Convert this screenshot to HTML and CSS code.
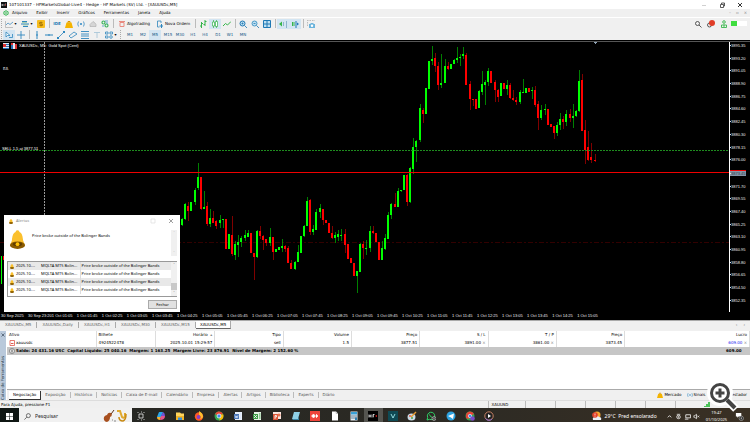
FILE: index.html
```html
<!DOCTYPE html>
<html lang="pt-BR">
<head>
    <meta charset="UTF-8">
    <meta name="viewport" content="width=device-width, initial-scale=1.0">
    <title>HFMarketsGlobal-Live4 - XAUUSDc,M5</title>
    <link rel="stylesheet" href="styles.css">
</head>
<body>
    <svg class="sprite" aria-hidden="true">
        <symbol id="bell" viewBox="0 0 16 20">
            <path d="M8 0C6.600 0 6 1 6 2 3 3 2.500 7 2 11L0 16h16l-2-5C13.500 7 13 3 10 2 10 1 9.400 0 8 0Z" fill="#fbc02d"/>
            <ellipse cx="8" cy="16" rx="8" ry="4" fill="#8a5a00"/>
            <ellipse cx="8" cy="15" rx="5" ry="2" fill="#5f3d00"/>
            <circle cx="8" cy="15" r="2" fill="#ffc107"/>
        </symbol>
        <symbol id="bag" viewBox="0 0 8 8">
            <path d="M3 3V1.500h2V3" fill="none" stroke="#d89000"/>
            <path d="M1.500 2.500h5L8 8H0Z" fill="#f5b400"/>
        </symbol>
        <symbol id="signal" viewBox="0 0 8 8">
            <path d="M1.500 1.500Q0 4 1.500 6.500M6.500 1.500Q8 4 6.500 6.500M3 3 5 5M5 3 3 5" fill="none" stroke="#3a8dc4" stroke-width=".8"/>
        </symbol>
        <symbol id="cloud" viewBox="0 0 8 8">
            <path d="M1 6.500V4.500L2.500 3 4 1.500 6 3l1 1.500v2Z" fill="#d6d6d6" stroke="#aaa" stroke-width=".6"/>
        </symbol>
        <symbol id="cross" viewBox="0 0 8 8">
            <path d="M2 2 6 6M6 2 2 6" fill="none" stroke="currentColor" stroke-width=".8"/>
        </symbol>
    </svg>

    <div class="app">
        <header class="titlebar">
            <svg class="logo" viewBox="0 0 6 6"><path fill="#111" d="M0 0h6v6H0z"/><path d="M1 2v2M2 2v2M1 3h1M4 4V2h1" stroke="#fff" stroke-width=".5"/><path d="M4 3h1" stroke="#e00" stroke-width=".7"/></svg>
            <h1 class="title">107101337 - HFMarketsGlobal-Live4 - Hedge - HF Markets (SV) Ltd. - [XAUUSDc,M5]</h1>
            <div class="window-buttons">
                <button class="win" aria-label="Minimizar"><svg viewBox="0 0 8 8"><path d="M2 4.500h4" stroke="#bbb" stroke-width=".7"/></svg></button>
                <button class="win" aria-label="Restaurar"><svg viewBox="0 0 8 8"><path d="M2.500 3.500h3v3h-3zM3.500 3V2h3v3H6" fill="none" stroke="#333" stroke-width=".8"/></svg></button>
                <button class="win" aria-label="Fechar"><svg viewBox="0 0 8 8"><use href="#cross"/></svg></button>
            </div>
        </header>

        <nav class="menubar">
            <svg class="menu-logo" viewBox="0 0 6 6"><path d="M1.500 1Q0 3 1.500 5M4.500 1Q6 3 4.500 5M3 0v6" fill="none" stroke="#2bb34a"/></svg>
            <button class="menu">Arquivo</button>
            <button class="menu">Exibir</button>
            <button class="menu">Inserir</button>
            <button class="menu">Gráficos</button>
            <button class="menu">Ferramentas</button>
            <button class="menu">Janela</button>
            <button class="menu">Ajuda</button>
            <div class="child-buttons"><span>–</span><span>▫</span><span>×</span></div>
        </nav>

        <div class="toolbar">
            <div class="grip"></div>
            <button class="tool drop" aria-label="Novo gráfico"><svg viewBox="0 0 8 8"><path d="M.5 1v6.500H8" fill="none" stroke="#aaa" stroke-width=".7"/><path d="M1 5 3 3l2 1.500L8 2" fill="none" stroke="#4a90c0" stroke-width=".8"/></svg><i>▾</i></button>
            <button class="tool drop" aria-label="Perfis"><svg viewBox="0 0 8 8"><path d="M1 1.500h5M0 4h8M2 6.500h5" stroke="#2f86bd"/><path d="M1 2.500h5M2 5h5" stroke="#76bd83" stroke-width=".6"/></svg><i>▾</i></button>
            <button class="tool" aria-label="Observação do mercado"><svg viewBox="0 0 8 8"><rect width="8" height="8" rx="1" fill="#f7bc1c"/><path d="M5.500 2.500h-3V4h3v1.500h-3M4 1.500v5" fill="none" stroke="#9a6a00" stroke-width=".7"/></svg></button>
            <div class="sep"></div>
            <button class="tool ide">IDE</button>
            <button class="tool" aria-label="Mercado"><svg><use href="#bag"/></svg></button>
            <button class="tool" aria-label="Sinais"><svg><use href="#signal"/></svg></button>
            <button class="tool" aria-label="VPS"><svg><use href="#cloud"/></svg></button>
            <button class="tool" aria-label="Otimização"><svg viewBox="0 0 8 8"><circle cx="2.500" cy="2.500" r="1.500" fill="none" stroke="#3ab45b" stroke-width="1.200"/><circle cx="5.500" cy="5.500" r="1.500" fill="none" stroke="#3ab45b" stroke-width="1.200"/><path d="M4 1h3M1 6h2M6 2v2" stroke="#2f86bd" stroke-width=".7"/></svg></button>
            <div class="sep"></div>
            <button class="tool wide algo"><svg viewBox="0 0 6 8"><path d="M1 2.500h4v4H1zM0 1.500h6" fill="none" stroke="#e98b80"/></svg>Algotrading</button>
            <button class="tool wide"><svg viewBox="0 0 6 8"><path d="M.5 1h3.500v2M.5 1v6h2" fill="none" stroke="#2f86bd" stroke-width=".8"/><path d="M4.500 4v4M2.500 6h4" stroke="#2f86bd"/></svg>Nova Ordem</button>
            <div class="sep"></div>
            <button class="tool" aria-label="Barras"><svg viewBox="0 0 8 8"><path d="M2.500 2v6M1 6h1.500M2.500 3.500H4M6 0v6M4.500 4.500H6M6 1.500h1.500" stroke="#35b54a"/></svg></button>
            <button class="tool on" aria-label="Velas"><svg viewBox="0 0 8 8"><path d="M2.500 0v8M5.500 0v8" stroke="#35b54a" stroke-width=".7"/><path d="M1.500 2h2v4h-2zM4.500 1.500h2v5h-2z" fill="#fff" stroke="#35b54a" stroke-width=".7"/></svg></button>
            <button class="tool" aria-label="Linha"><svg viewBox="0 0 8 8"><path d="M0 6 2.500 3.500 4.500 5 8 1.500" fill="none" stroke="#35b54a"/></svg></button>
            <div class="sep"></div>
            <button class="tool" aria-label="Ampliar"><svg viewBox="0 0 8 8"><circle cx="3.500" cy="3.500" r="2.500" fill="#bfe0f2" stroke="#1f78b4"/><path d="M5.500 5.500 8 8M2.500 3.500h2M3.500 2.500v2" stroke="#1f78b4" stroke-width=".8"/></svg></button>
            <button class="tool" aria-label="Reduzir"><svg viewBox="0 0 8 8"><circle cx="3.500" cy="3.500" r="2.500" fill="#bfe0f2" stroke="#4a9ac8"/><path d="M5.500 5.500 8 8M2.500 3.500h2" stroke="#1f78b4" stroke-width=".8"/></svg></button>
            <button class="tool" aria-label="Janelas lado a lado"><svg viewBox="0 0 8 8"><path d="M.5.500h7v7h-7zM4 .5v7M.5 4h7" fill="#bfe0f2" stroke="#1f78b4"/></svg></button>
            <div class="sep"></div>
            <button class="tool on" aria-label="Rolagem automática"><svg viewBox="0 0 8 8"><path d="M0 4 3 1.500v5Z" fill="#35b54a"/><path d="M4.500 2v4M7.500 1v7" stroke="#8db4cc"/></svg></button>
            <button class="tool on" aria-label="Deslocar gráfico"><svg viewBox="0 0 8 8"><path d="M1.500 2v4M3 2v4" stroke="#35b54a"/><path d="M5 1v7" stroke="#1f78b4"/><path d="M6 2.500 8 4 6 5.500Z" fill="#1f78b4"/></svg></button>
            <div class="sep"></div>
            <button class="tool" aria-label="Captura de tela"><svg viewBox="0 0 8 8"><path d="M0 .5h8M.5 2v5" stroke="#999" stroke-width=".6" stroke-dasharray="1.500 1"/><path d="M2 4h1l1-1h2l1 1h1v4H2Z" fill="#6cb4dc"/><circle cx="5" cy="5.700" r="1.200" fill="#fff"/></svg></button>
            <div class="toolbar-right">
                <button class="tool" aria-label="Pesquisar"><svg viewBox="0 0 8 8"><circle cx="3.500" cy="3.500" r="2" fill="none" stroke="#333" stroke-width=".8"/><path d="m5 5 2.500 2.500" stroke="#333" stroke-width=".8"/></svg></button>
                <button class="tool" aria-label="Notificações"><svg viewBox="0 0 8 8"><circle cx="2.500" cy="5" r="2" fill="none" stroke="#333" stroke-width=".8"/><circle cx="5" cy="3" r="3" fill="#e03c26"/></svg></button>
                <button class="tool" aria-label="Conta"><svg viewBox="0 0 8 8"><circle cx="4" cy="2" r="1.300" fill="none" stroke="#35b54a" stroke-width=".9"/><path d="M1.500 7.500V5h5v2.500ZM4 4.500V7" fill="none" stroke="#35b54a" stroke-width=".9"/></svg></button>
                <div class="battery"></div>
            </div>
        </div>

        <div class="toolbar">
            <div class="grip"></div>
            <button class="tool on" aria-label="Cursor"><svg viewBox="0 0 8 8"><path d="M1 1v5l1.500-1.500H5Z" fill="#fff" stroke="#2f86bd" stroke-width=".8"/><path d="M4 6.500h3.500V3" fill="none" stroke="#2f86bd" stroke-width=".8"/></svg></button>
            <button class="tool" aria-label="Mira"><svg viewBox="0 0 8 8"><path d="M4 0v8M0 4h8" stroke="#2f86bd" stroke-width=".9"/></svg></button>
            <div class="sep"></div>
            <button class="tool" aria-label="Linha vertical"><svg viewBox="0 0 8 8"><path d="M4 0v8M3 4h2" stroke="#2f86bd"/></svg></button>
            <button class="tool" aria-label="Linha horizontal"><svg viewBox="0 0 8 8"><path d="M0 4h8M4 3v2" stroke="#2f86bd"/></svg></button>
            <button class="tool" aria-label="Linha de tendência"><svg viewBox="0 0 8 8"><path d="m1 7 6-6" stroke="#2f86bd" stroke-width=".8"/><path d="M0 6h2v2H0zM6 0h2v2H6z" fill="#2f86bd"/></svg></button>
            <button class="tool" aria-label="Canal"><svg viewBox="0 0 8 8"><path d="m0 5 5-4M2 7l6-4M0 5l2 2M5 1l3 2" stroke="#2f86bd" stroke-width=".8"/></svg></button>
            <button class="tool" aria-label="Fibonacci"><svg viewBox="0 0 8 8"><path d="M0 .5h8M0 3h8M0 5h8M0 7.500h8" stroke="#2f86bd" stroke-width=".9"/></svg></button>
            <button class="tool" aria-label="Texto"><svg viewBox="0 0 8 8"><path d="M1 1.500h6M4 1.500V7" stroke="#a9c6d8" stroke-width=".9"/></svg></button>
            <button class="tool drop" aria-label="Objetos"><svg viewBox="0 0 8 8"><path d="M.5 1h2.500v2H.5zM5 1h2.500v2H5zM.5 5h2.500v2H.5z" fill="none" stroke="#2f86bd" stroke-width=".8"/><circle cx="6" cy="6" r="1.300" fill="none" stroke="#2f86bd" stroke-width=".8"/></svg><i>▾</i></button>
            <div class="grip periods-grip"></div>
            <button class="period">M1</button>
            <button class="period">M2</button>
            <button class="period on">M5</button>
            <button class="period">M15</button>
            <button class="period">M30</button>
            <button class="period">H1</button>
            <button class="period">H4</button>
            <button class="period">D1</button>
            <button class="period">W1</button>
            <button class="period">MN</button>
        </div>

        <main class="chart">
            <div class="plot-row">
                <svg class="plot" viewBox="0 0 729 270" preserveAspectRatio="none" shape-rendering="crispEdges">
                    <path d="M44.500 0v270" stroke="#999" stroke-dasharray="2 1"/>
                    <path d="M0 200.500h729" stroke="#320000" stroke-dasharray="5 2 2 2"/>
                    <g id="candles"></g>
                    <path d="M0 108.500h729" stroke="#1e8c1e" stroke-dasharray="2 1"/>
                    <path d="M0 130.500h729" stroke="#f00000"/>
                    <path d="M593 0h4l-2 2Z" fill="#8fa3b5"/>
                </svg>
                <ol class="prices">
                    <li>3895.35</li><li>3893.20</li><li>3891.05</li><li>3888.90</li><li>3886.75</li>
                    <li>3884.60</li><li>3882.45</li><li>3880.30</li><li>3878.15</li><li>3876.00</li>
                    <li class="bid">3873.45</li>
                    <li>3871.70</li><li>3869.55</li><li>3867.40</li><li>3865.25</li><li>3863.10</li>
                    <li>3860.95</li><li>3858.80</li><li>3856.65</li><li>3854.50</li><li>3852.35</li>
                </ol>
            </div>
            <ol class="times" id="times"></ol>

            <div class="chart-label">
                <svg viewBox="0 0 6 6"><path fill="#dfe9f5" d="M0 0h6v6H0z"/><path fill="#2a6fb5" d="M3 1h3v1H3zM3 3h3v1H3zM0 5h6v1H0z"/><path fill="#d33" d="M0 1h3v3H0z"/></svg>
                <svg viewBox="0 0 6 6"><path fill="#2a6fb5" d="M0 2h3v4H0z"/><path fill="#dfe9f5" d="M2 0h2v6H2z"/><path fill="#d33" d="M0 0h2v2H0zM4 1h2v5H4z"/></svg>
                <span>XAUUSDc, M5:</span>
                <span>Gold Spot (Cent)</span>
            </div>
            <span class="chart-note">EA</span>
            <span class="order-label">SELL 1.5 at 3877.51</span>

            <section class="alerts" role="dialog" aria-labelledby="alerts-title">
                <div class="alerts-head">
                    <svg class="bell"><use href="#bell"/></svg>
                    <h2 id="alerts-title">Alertas</h2>
                    <svg class="alerts-max" viewBox="0 0 8 8"><path d="M2 2h4v4H2z" fill="none" stroke="#ddd" stroke-width=".7"/></svg>
                    <button class="win" aria-label="Fechar alertas"><svg><use href="#cross"/></svg></button>
                </div>
                <div class="alerts-message">
                    <svg class="bell-big"><use href="#bell"/></svg>
                    <p>Price broke outside of the Bolinger Bands</p>
                    <div class="scroll light"><span>˄</span><span>˅</span></div>
                </div>
                <div class="alerts-list">
                    <table>
                        <tr><td><svg class="bell"><use href="#bell"/></svg></td><td>2025.10....</td><td>MQLTA MT5 Bolin...</td><td>Price broke outside of the Bolinger Bands</td></tr>
                        <tr><td><svg class="bell"><use href="#bell"/></svg></td><td>2025.10....</td><td>MQLTA MT5 Bolin...</td><td>Price broke outside of the Bolinger Bands</td></tr>
                        <tr><td><svg class="bell"><use href="#bell"/></svg></td><td>2025.10....</td><td>MQLTA MT5 Bolin...</td><td>Price broke outside of the Bolinger Bands</td></tr>
                        <tr><td><svg class="bell"><use href="#bell"/></svg></td><td>2025.10....</td><td>MQLTA MT5 Bolin...</td><td>Price broke outside of the Bolinger Bands</td></tr>
                    </table>
                    <div class="scroll"><span>˄</span><b></b><span>˅</span></div>
                </div>
                <button class="close-button">Fechar</button>
            </section>
        </main>

        <nav class="chart-tabs">
            <a href="#">XAUUSDc,M5</a>
            <a href="#">XAUUSDc,Daily</a>
            <a href="#">XAUUSDc,H1</a>
            <a href="#">XAUUSDc,M30</a>
            <a href="#">XAUUSDc,M15</a>
            <a href="#" class="active">XAUUSDc,M5</a>
            <span class="tab-arrows"><i>‹</i><i>›</i></span>
        </nav>

        <section class="toolbox">
            <div class="toolbox-side"><svg><use href="#cross"/></svg><span>Caixa de Ferramentas</span></div>
            <div class="toolbox-main">
                <table class="trades">
                    <colgroup>
                        <col class="c-asset"><col class="c-ticket"><col class="c-time"><col class="c-num"><col class="c-num"><col class="c-num"><col class="c-num"><col class="c-num"><col class="c-num"><col>
                    </colgroup>
                    <thead>
                        <tr><th class="left">Ativo</th><th class="left">Bilhete</th><th>Horário &nbsp;<i>▴</i></th><th>Tipo</th><th>Volume</th><th>Preço</th><th>S / L</th><th>T / P</th><th>Preço</th><th>Lucro</th></tr>
                    </thead>
                    <tbody>
                        <tr><td class="left"><svg class="row-icon" viewBox="0 0 6 6"><path d="M1 .5h4.500v5H1z" fill="#fff" stroke="#e05a4e" stroke-width=".8"/><path d="M2 3.500h2.500" stroke="#e05a4e"/></svg>xauusdc</td><td class="left">4924522478</td><td>2025.10.01 15:29:57</td><td>sell</td><td>1.5</td><td>3877.51</td><td>3891.00 <i>×</i></td><td>3861.00 <i>×</i></td><td>3873.45</td><td class="profit">609.00 <i>×</i></td></tr>
                        <tr class="summary"><td class="left" colspan="9"><svg class="row-icon" viewBox="0 0 6 6"><circle cx="3" cy="3" r="2.500" fill="#eee" stroke="#555" stroke-width=".6"/><path d="M3 1.500v3" stroke="#555"/></svg>Saldo: 24 431.16 USC&nbsp; Capital Líquido: 25 040.16&nbsp; Margem: 1 163.25&nbsp; Margem Livre: 23 876.91&nbsp; Nível de Margem: 2 152.60 %</td><td>609.00</td></tr>
                    </tbody>
                </table>
                <nav class="toolbox-tabs">
                    <a href="#" class="active">Negociação</a>
                    <a href="#">Exposição</a>
                    <a href="#">Histórico</a>
                    <a href="#">Notícias</a>
                    <a href="#">Caixa de E-mail</a>
                    <a href="#">Calendário</a>
                    <a href="#">Empresa</a>
                    <a href="#">Alertas</a>
                    <a href="#">Artigos</a>
                    <a href="#">Biblioteca</a>
                    <a href="#">Experts</a>
                    <a href="#">Diário</a>
                    <div class="services">
                        <button><svg><use href="#bag"/></svg>Mercado</button>
                        <button><svg><use href="#signal"/></svg>Sinais</button>
                        <button><svg><use href="#cloud"/></svg>VPS</button>
                        <button>Testador</button>
                    </div>
                </nav>
            </div>
        </section>

        <footer class="status">
            <span class="help">Para Ajuda, pressione F1</span>
            <span>XAUUSD</span><span></span><span></span><span></span><span></span><span></span>
            <span class="wide-cell"><svg viewBox="0 0 6 6"><path d="M0 5h2v1H0zM2 3h2v3H2zM4 1h2v5H4z" fill="#4cc35a"/></svg></span>
        </footer>

        <div class="taskbar">
            <button class="start" aria-label="Iniciar"><svg viewBox="0 0 8 8"><path d="M0 0h3.700v3.700H0zM4.300 0H8v3.700H4.300zM0 4.300h3.700V8H0zM4.300 4.300H8V8H4.300z" fill="#fff"/></svg></button>
            <label class="search">
                <svg class="lens" viewBox="0 0 8 8"><circle cx="5" cy="3" r="2.300" fill="none" stroke="#222" stroke-width=".7"/><path d="M3.200 4.700.5 7.500" stroke="#222" stroke-width=".7"/></svg>
                <input type="text" placeholder="Pesquisar">
                <svg class="music" viewBox="0 0 24 14"><path d="m3 12 8-11" stroke="#5b3018"/><path d="M1 11q-1-4 3-5 1-3 4-2 2 3-1 4 0 4-3 5-2 0-3-2Z" fill="#a8501f"/><path d="M14 2h3l2 6q2 2 3-1V4" fill="none" stroke="#e0a92e" stroke-width="2"/><path d="M16 8q0 4 4 4 3-1 3-7" fill="none" stroke="#c98b16" stroke-width="1.500"/><path d="M11 12h2M9 11h1" stroke="#888"/></svg>
            </label>
            <div class="apps" id="apps">
                <button aria-label="Visão de tarefas"><svg viewBox="0 0 10 10"><path d="M3 3h4v4H3zM2 1v1M8 1v1M2 8v1M8 8v1M5 1h1M5 9h1" fill="none" stroke="#e8e8e8" stroke-width=".8"/></svg></button>
                <button aria-label="Copilot"><svg viewBox="0 0 10 10"><path d="M3 1h4L5 6H1Z" fill="#2aa5e8"/><path d="M7 1q2 1 2 4H5Z" fill="#7453d6"/><path d="M1 6h4l-1 3Q1 9 1 6Z" fill="#f2b233"/><path d="M5 5h4Q9 9 4 9Z" fill="#e5548d"/></svg></button>
                <button aria-label="Explorador"><svg viewBox="0 0 10 10"><path d="M1 1.500h4l1 1h3V9H1Z" fill="#ffd45c"/><path d="M1 5h8v4H1Z" fill="#f0b429"/><path d="M3 6.500h4V9H3Z" fill="#3b8fd6"/></svg></button>
                <button aria-label="Firefox"><svg viewBox="0 0 10 10"><circle cx="5" cy="5.500" r="4.200" fill="#ff5a24"/><path d="M5 0q4 2 4 6-1 2-3 2 2-3-1-4Z" fill="#ffc02e"/><circle cx="4.500" cy="6" r="1.900" fill="#8a3fc5"/></svg></button>
                <button aria-label="Chrome"><svg viewBox="0 0 10 10"><circle cx="5" cy="5" r="4.500" fill="#34a853"/><path d="M1 3q2-3 4-2.500Q8 .5 9 3L5 5Z" fill="#ea4335"/><path d="M9.300 3.500q1 5-4 6L6 5V3.500Z" fill="#fbbc05"/><circle cx="5" cy="5" r="2" fill="#4285f4" stroke="#fff" stroke-width=".7"/></svg></button>
                <button aria-label="Word"><svg viewBox="0 0 10 10"><path fill="#e8effa" d="M2 1h7v8H2z"/><path d="M1 3h5v5H1z" fill="#4d78b8"/><path d="M2 4.500 3 7l.5-2L4 7l1-2.500M7 3h1M7 5h1M7 7h1" fill="none" stroke="#cddcf2" stroke-width=".8"/></svg></button>
                <button aria-label="Excel"><svg viewBox="0 0 10 10"><path fill="#e5f3e3" d="M2 1h7v8H2z"/><path d="M1 3h5v5H1z" fill="#3e9b45"/><path d="m2 4 3 3M5 4 2 7" stroke="#fff" stroke-width=".8"/><path d="M7 3h1.500M7 5h1.500M7 7h1.500" stroke="#3e9b45"/></svg></button>
                <button aria-label="PowerPoint"><svg viewBox="0 0 10 10"><path fill="#fbe6df" d="M1 1h8v7H1z"/><path d="M1 3h5v6H1z" fill="#dc5637"/><path d="M3 8V4.500h1.500v1.500H3" fill="none" stroke="#fff" stroke-width=".8"/><circle cx="7" cy="4" r="1.500" fill="#e8734f"/></svg></button>
                <button aria-label="Bloco"><svg viewBox="0 0 10 10"><path d="M3 1h6L7 8H1Z" fill="#8fd0e6"/><path d="M1 8h6l1-3v4H2Z" fill="#3d87a8"/></svg></button>
                <button aria-label="AnyDesk"><svg viewBox="0 0 10 10"><path fill="#ef443b" d="M0 0h10v10H0z"/><path d="m3.500 3 2 2-2 2-2-2ZM6 3l2 2-2 2" fill="#fff" stroke="#fff" stroke-width=".6"/></svg></button>
                <button aria-label="Documento"><svg viewBox="0 0 10 10"><path d="M2 .5h4l2 2V9.500H2Z" fill="#fff"/><path d="M6 .5v2h2" fill="none" stroke="#999" stroke-width=".5"/></svg></button>
                <button aria-label="Calculadora"><svg viewBox="0 0 10 10"><path fill="#e6eef4" d="M1.500.5h7v9h-7z"/><path fill="#39a0d6" d="M2 1h6v2.500H2z"/><path d="M2 5h6M2 7h6" stroke="#52738c" stroke-width=".9"/><path d="M6 6.500h2V9H6z" fill="#2d7fb0"/></svg></button>
                <button class="current" aria-label="MetaTrader"><svg viewBox="0 0 10 10"><path fill="#000" d="M0 0h10v10H0z"/><path d="M1 3.500v3M3 3.500v3M1 5h2M5 6.500v-3h1.500M5 5h1" fill="none" stroke="#fff" stroke-width=".8"/><path d="m7 5 2-1v2Z" fill="#e22"/></svg></button>
                <button class="open" aria-label="VPS"><svg viewBox="0 0 10 10"><path fill="#0f4a54" d="M0 0h10v10H0z"/><path d="m3 3 2 4 2-4" fill="none" stroke="#9fe6ea" stroke-width=".9"/></svg></button>
                <button aria-label="Paint"><svg viewBox="0 0 10 10"><ellipse cx="4.500" cy="6" rx="4" ry="3.500" fill="#c9dbe6"/><circle cx="3" cy="5" r=".9" fill="#e04b3a"/><circle cx="5" cy="7" r=".9" fill="#3a9a46"/><path d="M9 1 4 6" stroke="#e89a2e" stroke-width="1.500"/></svg></button>
                <button aria-label="WhatsApp"><svg viewBox="0 0 10 10"><path d="M1 9 1.700 6.500A3.700 3.700 0 1 1 3.500 8.300Z" fill="none" stroke="#2fd366"/><path d="M3.500 3.500q.5 2.500 3 3" fill="none" stroke="#2fd366"/><circle cx="8" cy="7.500" r="2" fill="#333" stroke="#eee" stroke-width=".5"/><path d="M8 6.500v2" stroke="#fff" stroke-width=".6"/></svg></button>
                <button aria-label="Telegram"><svg viewBox="0 0 10 10"><circle cx="5" cy="5" r="4.500" fill="#2ea3e0"/><path d="m2 5 6-2.500L7 8 4.500 6.300Z" fill="#fff"/></svg></button>
                <button class="open" aria-label="Chrome perfil"><svg viewBox="0 0 10 10"><circle cx="5" cy="5" r="4.500" fill="#34a853"/><path d="M1 3q2-3 4-2.500Q8 .5 9 3L5 5Z" fill="#ea4335"/><path d="M1 3v4l3 1 1-3Z" fill="#e6453a"/><circle cx="5" cy="5" r="1.700" fill="#4285f4" stroke="#fff" stroke-width=".6"/><circle cx="7.500" cy="7.500" r="2.300" fill="#7b4bc9"/></svg></button>
                <button class="open" aria-label="Reprodutor"><svg viewBox="0 0 10 10"><circle cx="5" cy="5" r="4.200" fill="#222" stroke="#d68a6a" stroke-width=".9"/><path d="M1.500 7.500A4.200 4.200 0 0 0 8 8" fill="none" stroke="#8d6fe0" stroke-width=".9"/><path d="M4 3v4l3-2Z" fill="#fff"/></svg></button>
            </div>
            <div class="tray">
                <svg class="weather" viewBox="0 0 10 10"><circle cx="5" cy="4" r="3.500" fill="#f7a531"/><path d="M1 9q-1-3 2-3 2-3 4 0 3 0 2 3Z" fill="#e9eef5"/><circle cx="3" cy="4" r="2.800" fill="#e2412b"/><path d="M3 2.500v2M3 5v.6" stroke="#fff" stroke-width=".7"/></svg>
                <span class="forecast">29°C&nbsp; Pred ensolarado</span>
                <svg class="tray-icon" viewBox="0 0 8 8"><path d="m2 5 2-2 2 2" fill="none" stroke="#fff" stroke-width=".9"/></svg>
                <svg class="tray-icon" viewBox="0 0 8 8"><circle cx="4" cy="4.500" r="2" fill="none" stroke="#fff" stroke-width=".9"/><path d="M2 1.500h4M4 3.500v2" stroke="#fff" stroke-width=".8"/></svg>
                <svg class="tray-icon" viewBox="0 0 8 8"><path d="M2 2h5.500v3.500H2zM1 7h4" fill="none" stroke="#fff" stroke-width=".9"/></svg>
                <svg class="tray-icon" viewBox="0 0 8 8"><path d="M1 3h1l2-1.500v5L2 5H1Z" fill="none" stroke="#fff" stroke-width=".8"/><path d="m5 3 2 2M7 3 5 5" stroke="#fff" stroke-width=".8"/></svg>
                <time class="clock">19:47<br>01/10/2025</time>
                <svg class="tray-note" viewBox="0 0 10 10"><path d="M1 1h6v4H4L2.500 6.500V5H1Z" fill="#fff"/><circle cx="7" cy="7" r="2.500" fill="#333" stroke="#bbb" stroke-width=".6"/><path d="M7 6v2" stroke="#fff" stroke-width=".7"/></svg>
            </div>
        </div>
    </div>

    <button class="magnify" aria-label="Ampliar imagem">
        <svg viewBox="0 0 34 34"><path d="m19 19 10 10" stroke="#fff" stroke-width="8"/><circle cx="13" cy="13" r="11" fill="#fff" stroke="#fff" stroke-width="4"/><circle cx="13" cy="13" r="8.500" fill="#fff" stroke="#444" stroke-width="3"/><path d="m20 20 8 8" stroke="#444" stroke-width="4"/><path d="M8.500 13h9M13 8.500v9" stroke="#444" stroke-width="3"/></svg>
    </button>

    <script src="script.js"></script>
</body>
</html>
```

FILE: styles.css
```css
* {
    box-sizing: border-box;
}

body {
    margin: 0;
    font-family: "DejaVu Sans", "Noto Sans", sans-serif;
    font-size: 4px;
    line-height: 8px;
    color: #000;
    background: #f0f0f0;
}

h1, h2, p, ol {
    margin: 0;
    padding: 0;
    font-size: 4px;
    font-weight: normal;
    list-style: none;
}

button {
    display: flex;
    align-items: center;
    justify-content: center;
    padding: 0;
    border: 0;
    background: none;
    color: inherit;
    font: inherit;
    white-space: nowrap;
}

a {
    color: inherit;
    text-decoration: none;
}

i {
    font-style: normal;
}

svg {
    display: block;
    flex: none;
}

.sprite {
    display: none;
}

.app {
    display: flex;
    flex-direction: column;
    min-height: 100vh;
}

/* title and menu */
.titlebar {
    display: flex;
    align-items: center;
    height: 9px;
    padding: 0 6px 0 1px;
    background: #fff;
}

.logo {
    width: 6px;
    height: 6px;
    margin-right: 2px;
}

.title {
    white-space: nowrap;
}

.window-buttons {
    display: flex;
    gap: 10px;
    margin-left: auto;
}

.win svg {
    width: 8px;
    height: 8px;
}

.menubar {
    display: flex;
    align-items: center;
    gap: 9px;
    height: 9px;
    padding: 0 3px;
    border-bottom: 1px solid #fff;
}

.menu-logo {
    width: 6px;
    height: 6px;
    margin-right: -6px;
}

.child-buttons {
    display: flex;
    gap: 5px;
    margin-left: auto;
    color: #888;
}

/* toolbars */
.toolbar {
    display: flex;
    align-items: center;
    height: 11px;
}

.grip {
    width: 1px;
    height: 9px;
    margin: 0 1px;
    border-left: 1px dotted #aaa;
}

.periods-grip {
    margin-right: 3px;
}

.tool {
    width: 12px;
    height: 10px;
    color: #000;
}

.tool svg {
    width: 8px;
    height: 8px;
}

.tool.drop {
    gap: 1px;
    width: 16px;
}

.tool.wide {
    gap: 2px;
    width: 39px;
}

.tool.wide svg {
    width: 6px;
}

.tool.ide {
    color: #1f78b4;
    font-weight: bold;
}

.on {
    background: #d3e5f2;
}

.sep {
    width: 1px;
    height: 9px;
    margin: 0 1px 0 2px;
    background: #bbb;
}

.toolbar-right {
    display: flex;
    align-items: center;
    gap: 1px;
    margin-left: auto;
    padding-right: 3px;
}

.battery {
    width: 16px;
    height: 5px;
    background: linear-gradient(90deg, #3fdd3f 6px, #fff 6px);
}

.period {
    width: 12px;
    height: 10px;
    margin-right: 1px;
    color: #175a88;
}

.period:nth-child(even) {
    margin-right: 0;
}

/* chart */
.chart {
    position: relative;
    display: flex;
    flex: 1;
    flex-direction: column;
    background: #000;
    border-top: 1px solid #000;
    color: #eee;
}

.plot-row {
    display: flex;
    flex: 1;
    min-height: 0;
    border-top: 1px solid #555;
}

.plot {
    flex: 1;
    min-width: 0;
    height: 100%;
    border-right: 1px solid #fff;
    box-sizing: content-box;
}

.plot-row,
.times {
    font-family: "Liberation Sans", sans-serif;
}

.up {
    fill: #0f0;
}

.down {
    fill: #f00;
}

.wick {
    opacity: .5;
}

.prices {
    display: flex;
    flex-direction: column;
    justify-content: space-between;
    width: 20px;
    padding: 1px 4px 9px 0;
    line-height: 5px;
}

.prices li {
    display: flex;
}

.prices li::before {
    content: "";
    align-self: center;
    width: 1px;
    height: 1px;
    background: #ddd;
}

.prices .bid {
    border-top: 1px solid #f00000;
    background: #8494a6;
    color: #2d3b4a;
}

.times {
    display: flex;
    height: 8px;
    padding: 0 0 0 1px;
    line-height: 7px;
}

.times li {
    flex: 0 0 3.34%;
    white-space: nowrap;
}

.times li:first-child {
    flex-basis: 27px;
}

.times li:nth-child(2) {
    flex-basis: 22px;
}

.chart-label {
    position: absolute;
    top: 1px;
    left: 3px;
    display: flex;
    align-items: center;
    gap: 2px;
    color: #fff;
    font-family: "Liberation Sans", sans-serif;
}

.chart-label svg {
    width: 6px;
    height: 6px;
}

.chart-note {
    position: absolute;
    top: 24px;
    left: 3px;
}

.order-label {
    position: absolute;
    top: 104px;
    left: 2px;
    color: #fff;
    font-family: "Liberation Sans", sans-serif;
    line-height: 7px;
}

/* alert window */
.alerts {
    position: absolute;
    bottom: 8px;
    left: 4px;
    width: 176px;
    padding: 0 3px 3px;
    background: #fff;
    color: #000;
    font-family: "Noto Sans", sans-serif;
}

.alerts-head {
    display: flex;
    align-items: center;
    height: 12px;
    color: #888;
}

.alerts-head h2 {
    flex: 1;
    margin-left: 3px;
}

.alerts-max {
    width: 8px;
    height: 8px;
    margin-right: 10px;
}

.alerts-head .win {
    margin-right: 2px;
}

.bell {
    width: 4px;
    height: 5px;
    margin-left: 2px;
}

.alerts-message {
    display: flex;
    height: 34px;
    padding-top: 3px;
}

.bell-big {
    width: 15px;
    height: 19px;
    margin-left: 3px;
}

.alerts-message p {
    flex: 1;
    margin: 2px 0 0 7px;
}

.scroll {
    display: flex;
    flex-direction: column;
    justify-content: space-between;
    align-items: center;
    width: 6px;
    background: #f0f0f0;
    color: #444;
    line-height: 6px;
}

.scroll b {
    width: 6px;
    height: 7px;
    margin-top: auto;
    background: #c9c9c9;
}

.scroll.light {
    height: 26px;
    color: #aaa;
}

.alerts-list {
    display: flex;
    height: 36px;
    border: 1px solid #999;
    border-right: 0;
}

.alerts-list table {
    flex: 1;
    align-self: flex-start;
    border-collapse: collapse;
    table-layout: fixed;
}

.alerts-list td {
    width: 8px;
    height: 8px;
    padding: 0;
    line-height: 8px;
    white-space: nowrap;
}

.alerts-list td:nth-child(2) {
    width: 25px;
}

.alerts-list td:nth-child(3) {
    width: 39px;
}

.alerts-list tr:nth-child(odd) {
    background: #e8e8e8;
}

.alerts-list td:last-child {
    width: auto;
    padding-left: 1px;
    border-left: 1px solid #ddd;
}

.close-button {
    width: 29px;
    height: 9px;
    margin: 3px 0 0 auto;
    border: 1px solid #aaa;
    background: #e1e1e1;
}

/* chart tabs */
.chart-tabs {
    display: flex;
    align-items: center;
    height: 11px;
    padding: 0 5px 2px 0;
    border-top: 1px solid #aaa;
    color: #666;
}

.chart-tabs a {
    padding: 0 5px;
    border-right: 1px solid #aaa;
    line-height: 6px;
}

.chart-tabs .active {
    padding: 0 4px;
    background: #fff;
    border-bottom: 1px solid #666;
    color: #000;
    line-height: 7px;
}

.tab-arrows {
    display: flex;
    gap: 6px;
    margin-left: auto;
}

/* toolbox */
.toolbox {
    display: flex;
    height: 69px;
}

.toolbox-side {
    display: flex;
    flex-direction: column;
    align-items: center;
    justify-content: space-between;
    width: 6px;
    background: #b9c9db;
    color: #234;
}

.toolbox-side svg {
    width: 6px;
    height: 8px;
}

.toolbox-side span {
    writing-mode: vertical-rl;
    transform: rotate(180deg);
    line-height: 6px;
    white-space: nowrap;
}

.toolbox-main {
    display: flex;
    flex: 1;
    flex-direction: column;
    min-width: 0;
    padding-left: 1px;
    background: #fff;
}

.trades {
    width: 100%;
    border-collapse: collapse;
    table-layout: fixed;
}

.c-asset {
    width: 12%;
}

.c-ticket {
    width: 8%;
}

.c-time {
    width: 8%;
}

.c-num {
    width: 9.2%;
}

.trades th,
.trades td {
    height: 8px;
    padding: 0 2px 0 0;
    font-weight: normal;
    line-height: 8px;
    text-align: right;
    white-space: nowrap;
}

.trades th,
.trades tbody tr:first-child td {
    border-right: 1px solid #ddd;
}

.trades .left {
    padding-left: 2px;
    text-align: left;
}

.trades .profit {
    color: #22e;
}

.trades i {
    color: #888;
}

.row-icon {
    display: inline-block;
    width: 6px;
    height: 6px;
    margin-right: 1px;
    vertical-align: -2px;
}

.trades .summary td {
    background: #c6c6c6;
    font-weight: bold;
}

.trades .summary td:last-child {
    padding-right: 8px;
}

.toolbox-tabs {
    display: flex;
    align-items: center;
    height: 11px;
    margin-top: auto;
    border-top: 1px solid #aaa;
    background: #f0f0f0;
    color: #555;
}

.toolbox-tabs a {
    padding: 0 4px;
    border-right: 1px solid #bbb;
    line-height: 6px;
}

.toolbox-tabs a:nth-child(12) {
    border-right: 0;
}

.toolbox-tabs .active {
    margin: 0 0 0 2px;
    padding: 0 4px;
    border-right: 1px solid #333;
    border-bottom: 1px solid #333;
    background: #fff;
    color: #000;
    line-height: 8px;
}

.services {
    display: flex;
    gap: 5px;
    margin-left: auto;
    padding-right: 3px;
    color: #000;
}

.services svg {
    width: 6px;
    height: 6px;
    margin-right: 1px;
}

/* status bar */
.status {
    display: flex;
    height: 8px;
    border-top: 1px solid #ddd;
    line-height: 7px;
}

.status span {
    flex: 0 0 4%;
    padding-left: 3px;
    border-left: 1px solid #bbb;
}

.status .help {
    flex: 1;
    padding-left: 1px;
    border-left: 0;
}

.status .help + span {
    flex-basis: 5%;
}

.status .wide-cell {
    flex-basis: 10%;
    padding-left: 28px;
}

.status svg {
    width: 6px;
    height: 6px;
}

/* taskbar */
.taskbar {
    display: flex;
    align-items: stretch;
    height: 16px;
    background: linear-gradient(90deg, #242622, #2c2a24 60%, #3a3024);
    color: #fff;
    font-family: "Noto Sans", sans-serif;
    font-size: 5px;
}

.start {
    width: 19px;
    background: #0f1613;
}

.start svg {
    width: 7px;
    height: 7px;
}

.search {
    display: flex;
    align-items: center;
    width: 15%;
    padding: 0 5px;
    background: #f1f1f1;
}

.lens {
    width: 7px;
    height: 7px;
}

.search input {
    flex: 1;
    min-width: 0;
    padding: 0 0 0 4px;
    border: 0;
    background: none;
    font: inherit;
}

.search input::placeholder {
    color: #222;
}

.music {
    width: 24px;
    height: 14px;
}

.apps {
    display: grid;
    grid-template-columns: repeat(19, 1fr);
    width: 49%;
}

.apps button {
    border-bottom: 1px solid transparent;
}

.apps svg {
    width: 10px;
    height: 10px;
}

.apps .open {
    border-color: #76b9ed;
}

.apps .current {
    border-color: #76b9ed;
    background: #555550;
}

.tray {
    display: flex;
    align-items: center;
    margin-left: auto;
    padding-right: 6px;
    white-space: nowrap;
}

.weather {
    width: 10px;
    height: 10px;
}

.forecast {
    margin: 0 9px 0 3px;
}

.tray-icon {
    width: 7px;
    height: 7px;
    margin-right: 2px;
}

.clock {
    margin: 0 8px 0 4px;
    font-size: 4px;
    line-height: 7px;
    text-align: center;
}

.tray-note {
    width: 9px;
    height: 9px;
}

.magnify {
    position: fixed;
    right: 9px;
    bottom: 8px;
}

.magnify svg {
    width: 34px;
    height: 34px;
}
```

FILE: script.js
```js
// one candle per row: direction, body top, body bottom, wick top, wick bottom
var candles = [
    ["u", 219, 225, 218, 226], ["u", 204, 219, 203, 220], ["d", 206, 211, 202, 221], ["u", 202, 211, 202, 211],
    ["u", 190, 202, 188, 205], ["u", 177, 188, 163, 190], ["d", 177, 209, 177, 210], ["u", 207, 209, 191, 209],
    ["d", 206, 224, 202, 226], ["u", 218, 224, 209, 227], ["d", 218, 223, 211, 223], ["d", 221, 226, 220, 229],
    ["u", 220, 223, 215, 228], ["u", 219, 220, 219, 228], ["d", 219, 249, 219, 249], ["u", 234, 249, 234, 249],
    ["d", 235, 254, 216, 256], ["u", 244, 255, 241, 260], ["u", 242, 245, 235, 257], ["u", 238, 242, 236, 247],
    ["u", 235, 238, 230, 241], ["u", 233, 237, 230, 237], ["d", 233, 253, 233, 253], ["d", 253, 257, 253, 280],
    ["u", 231, 257, 230, 258], ["d", 231, 236, 226, 239], ["d", 236, 240, 235, 250], ["d", 239, 243, 239, 246],
    ["u", 237, 243, 228, 246], ["d", 237, 252, 237, 260], ["u", 249, 252, 249, 252], ["u", 247, 250, 247, 250],
    ["u", 246, 248, 239, 252], ["d", 246, 249, 245, 252], ["d", 248, 263, 246, 263], ["d", 263, 269, 260, 269],
    ["u", 262, 269, 261, 270], ["u", 252, 262, 245, 262], ["u", 236, 253, 236, 253], ["u", 226, 236, 225, 237],
    ["u", 201, 226, 197, 226], ["d", 200, 232, 199, 235], ["u", 229, 232, 225, 235], ["u", 212, 230, 209, 230],
    ["u", 208, 212, 204, 218], ["d", 209, 220, 209, 225], ["d", 220, 223, 220, 223], ["d", 223, 233, 223, 233],
    ["d", 233, 238, 226, 239], ["u", 235, 238, 232, 243], ["u", 234, 237, 230, 241], ["u", 235, 236, 229, 241],
    ["d", 234, 245, 229, 253], ["d", 244, 259, 244, 259], ["d", 258, 263, 258, 263], ["d", 263, 276, 263, 276],
    ["u", 271, 276, 271, 293], ["u", 244, 272, 243, 272], ["d", 244, 248, 241, 259], ["u", 248, 249, 240, 255],
    ["u", 231, 248, 226, 252], ["d", 231, 233, 226, 234], ["d", 233, 242, 233, 242], ["d", 242, 260, 242, 260],
    ["u", 248, 260, 241, 260], ["u", 238, 249, 234, 250], ["u", 215, 239, 212, 239], ["u", 204, 215, 203, 219],
    ["d", 204, 207, 193, 207], ["u", 191, 207, 188, 207], ["u", 190, 191, 190, 192], ["u", 175, 190, 175, 190],
    ["d", 175, 202, 174, 206], ["u", 168, 202, 167, 203], ["u", 147, 169, 138, 174], ["u", 141, 147, 140, 162],
    ["u", 108, 140, 104, 142], ["d", 110, 114, 108, 123], ["u", 88, 114, 88, 114], ["u", 61, 89, 61, 89],
    ["u", 59, 61, 46, 65], ["d", 58, 66, 53, 72], ["d", 66, 85, 62, 90], ["u", 83, 85, 54, 88],
    ["u", 66, 83, 59, 83], ["d", 66, 69, 62, 70], ["u", 64, 69, 64, 69], ["u", 60, 64, 59, 64],
    ["u", 58, 60, 47, 63], ["u", 57, 58, 54, 66], ["u", 54, 56, 47, 59], ["d", 55, 85, 53, 85],
    ["d", 84, 99, 81, 110], ["d", 99, 100, 99, 106], ["d", 99, 109, 99, 109], ["u", 91, 108, 90, 108],
    ["u", 84, 92, 71, 95], ["u", 82, 85, 80, 105], ["u", 71, 82, 68, 86], ["d", 71, 83, 71, 83],
    ["d", 82, 90, 80, 102], ["d", 90, 97, 89, 102], ["u", 83, 96, 83, 96], ["d", 83, 89, 83, 89],
    ["u", 85, 89, 80, 95], ["d", 85, 98, 83, 99], ["d", 98, 100, 90, 101], ["d", 100, 102, 97, 105],
    ["u", 92, 102, 90, 104], ["u", 92, 93, 79, 93], ["u", 88, 93, 88, 93], ["d", 88, 92, 88, 92],
    ["u", 90, 91, 87, 99], ["d", 90, 105, 86, 107], ["d", 104, 118, 101, 130], ["u", 110, 118, 105, 120],
    ["u", 109, 110, 104, 115], ["d", 109, 125, 109, 125], ["d", 124, 127, 124, 127], ["d", 126, 133, 126, 139],
    ["u", 125, 133, 122, 136], ["u", 119, 125, 113, 130], ["d", 119, 122, 116, 129], ["u", 114, 122, 110, 126],
    ["d", 114, 118, 109, 122], ["u", 116, 118, 104, 128], ["u", 111, 116, 110, 117], ["u", 81, 111, 70, 112],
    ["d", 80, 131, 74, 131], ["d", 130, 150, 120, 164], ["d", 147, 160, 131, 161], ["d", 157, 160, 143, 163],
    ["d", 160, 161, 154, 162]
];

var group = document.getElementById("candles");
var chartTop = 42;

function bar(className, x, y, width, height) {
    var rect = document.createElementNS("http://www.w3.org/2000/svg", "rect");
    rect.setAttribute("class", className);
    rect.setAttribute("x", x);
    rect.setAttribute("y", y - chartTop);
    rect.setAttribute("width", width);
    rect.setAttribute("height", height);
    group.appendChild(rect);
}

candles.forEach(function(c, i) {
    var x = Math.round(182 + 3.125 * i);
    var side = c[0] === "u" ? "up" : "down";
    bar(side + " wick", x, c[3], 1, c[4] - c[3]);
    bar(side, x - 1, c[1], 2, c[2] - c[1]);
});

// candles left of the alert window
bar("up", 1, 256, 1, 28);
bar("down", 3, 256, 1, 4);

// time scale, one label every 40 minutes
var times = document.getElementById("times");
var labels = ["30 Sep 2025", "30 Sep 23:20"];
for (var m = 65; m <= 905; m += 40) {
    labels.push("1 Oct " + String(Math.floor(m / 60)).padStart(2, "0") + ":" + String(m % 60).padStart(2, "0"));
}
labels.forEach(function(text) {
    var li = document.createElement("li");
    li.textContent = text;
    times.appendChild(li);
});
```
